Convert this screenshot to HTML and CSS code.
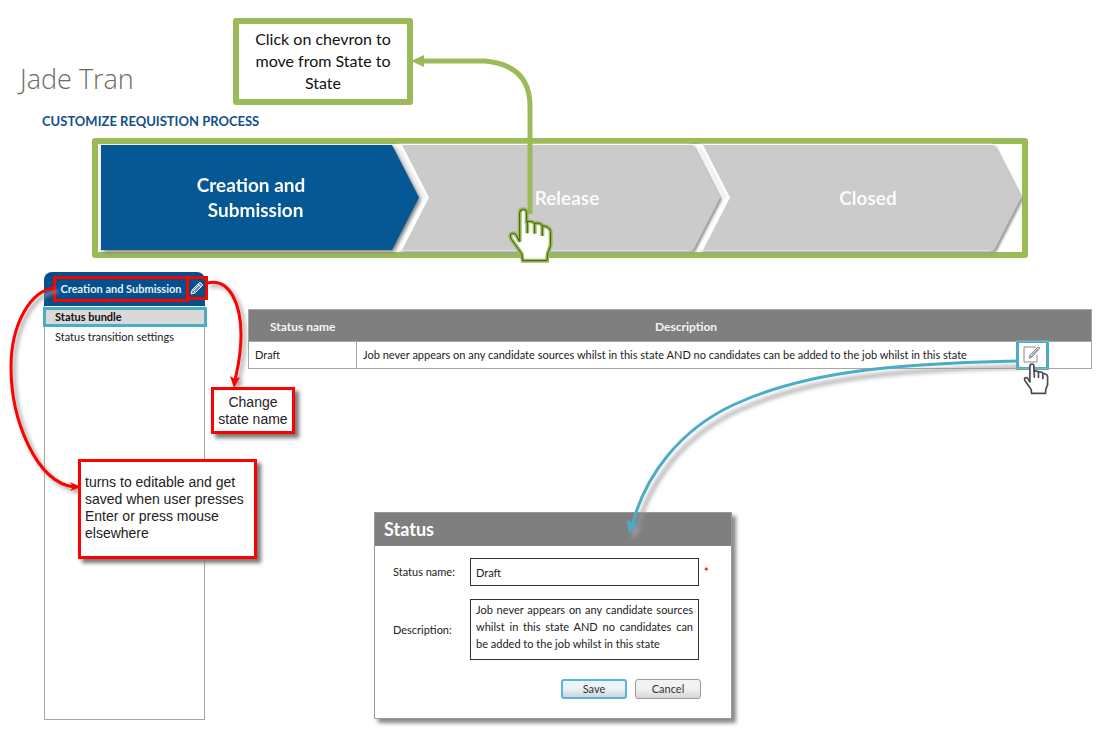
FILE: index.html
```html
<!DOCTYPE html>
<html lang="en">
<head>
<meta charset="utf-8">
<title>Customize requisition process</title>
<link rel="stylesheet" href="styles.css">
</head>
<body>
<div class="page">
  <header class="page-header">
    <h1 class="user-name">Jade Tran</h1>
    <h2 class="page-title">CUSTOMIZE REQUISTION PROCESS</h2>
  </header>

  <nav class="process" aria-label="Process states">
    <div class="step step-active"><button class="chevron" type="button">Creation and<br>&nbsp; Submission</button></div>
    <div class="step"><button class="chevron" type="button">Release</button></div>
    <div class="step"><button class="chevron" type="button">Closed</button></div>
  </nav>

  <div class="content">
    <aside class="sidebar">
      <div class="sidebar-head">
        <button class="state-name" type="button">Creation and Submission</button>
        <button class="state-edit" type="button" aria-label="Edit state name">
          <svg viewBox="0 0 14 14" width="14" height="14"><path d="M1 13l1-4 7-7q1-1 2 0l1 1q1 1 0 2l-7 7zM8 3l3 3M3 9l2 2M4 9l5-5" fill="#6d8fb5" stroke="#e8eef5"/></svg>
        </button>
      </div>
      <ul class="menu">
        <li><a class="menu-item menu-current" href="#bundle">Status bundle</a></li>
        <li><a class="menu-item" href="#transitions">Status transition settings</a></li>
      </ul>
    </aside>

    <main class="main">
      <table class="status-table">
        <thead><tr><th class="col-name">Status name</th><th>Description</th><th class="col-action"></th></tr></thead>
        <tbody><tr>
          <td>Draft</td>
          <td>Job never appears on any candidate sources whilst in this state AND no candidates can be added to the job whilst in this state</td>
          <td class="cell-action"><button class="edit-button" type="button" aria-label="Edit status">
            <svg viewBox="0 0 18 18" width="18" height="18" fill="none" stroke="#8a8a8a"><path d="M13 1H1v15h13V9"/><path d="M6 12l1-3 8-8 2 1-8 9zM7 9l2 2M9 9l6-6" fill="#ddd"/></svg>
          </button></td>
        </tr></tbody>
      </table>

      <form class="dialog">
        <h3 class="dialog-title">Status</h3>
        <div class="dialog-body">
          <label for="status-name">Status name:</label>
          <input class="field" id="status-name" type="text" value="Draft">
          <span class="required">*</span>
          <label for="description">Description:</label>
          <textarea class="field field-area" id="description">Job never appears on any candidate sources whilst in this state AND no candidates can be added to the job whilst in this state</textarea>
        </div>
        <div class="actions">
          <button class="button button-primary" type="button">Save</button>
          <button class="button" type="button">Cancel</button>
        </div>
      </form>
    </main>
  </div>

  <svg class="connectors" viewBox="0 0 1112 730" width="1112" height="730" aria-hidden="true">
    <defs>
      <g id="hand">
        <path d="M89 155V68q0-10 11-10t10 10v27q18-3 23 5 20-3 24 7 22 2 25 17v42l-9 25-2 21H98l-3-21-30-42q-10-17 3-19 8-1 12 8z"/>
        <path d="M112 93v37M134 98v33M157 106v32" fill="none"/>
      </g>
    </defs>
    <g fill="none" stroke="#9bbb59" stroke-width="5">
      <path d="M420 61H485Q530 65 530 106V214"/>
      <path d="M411 61l13-6v12z" fill="#9bbb59" stroke="none"/>
    </g>
    <g transform="translate(490 190) scale(.3333)">
      <use href="#hand" fill="#fff" stroke="#9bbb59" stroke-width="12"/>
      <use href="#hand" fill="none" stroke="#3f5723" stroke-width="3"/>
    </g>
    <g class="cast" fill="none" stroke="#f00" stroke-width="3">
      <path d="M55 288C30 290 11 325 11 367C11 420 36 482 74 487"/>
      <path d="M81 487l-11-5 3 5-3 4z" fill="#f00" stroke="none"/>
      <path d="M207 283C230 277 241 305 241 335C241 356 238 366 235 380"/>
      <path d="M234 388l-4-12 5 3 5-2z" fill="#f00" stroke="none"/>
    </g>
    <g class="cast cast-far" fill="none" stroke="#4bacc6" stroke-width="3">
      <path d="M1016 361C880 364 800 374 733 405C680 430 645 475 632 526"/>
      <path d="M629 534l-2-14 5 3 6-1z" fill="#4bacc6" stroke="none"/>
    </g>
    <g transform="translate(1013 353) scale(.19)">
      <use href="#hand" fill="#fff" stroke="#4d4d58" stroke-width="9"/>
    </g>
  </svg>

  <p class="note note-green">Click on chevron to move from State to State</p>
  <p class="note note-red note-rename">Change<br>state name</p>
  <p class="note note-red note-editable">turns to editable and get saved when user presses Enter or press mouse elsewhere</p>
</div>
</body>
</html>
```
FILE: styles.css
```css
* { box-sizing: border-box; }

body {
  margin: 0;
  background: #fff;
  color: #222;
  font: 11px/16px Lato, "Open Sans", sans-serif;
}

button, input, textarea { font: inherit; color: inherit; margin: 0; }
h1, h2, h3, p, ul { margin: 0; padding: 0; }

.page { position: relative; min-height: 730px; padding: 61px 20px 0; }

.user-name { color: #6c6c64; font: 300 27px/36px "Open Sans", sans-serif; }
.page-title { margin: 14px 0 0 22px; color: #12508c; font-size: 13px; line-height: 20px; }

/* Process chevrons */
.process {
  display: flex;
  margin: 7px 64px 0 72px;
  padding: 1px 1px 2px 3px;
  border: 6px solid #9bbb59;
  border-radius: 3px;
}
.step { flex: 1; filter: drop-shadow(2px 2px 2px #777); }
.step + .step { margin-left: -17px; filter: drop-shadow(-3px 0 1px #fff) drop-shadow(-1px 0 1px #fff) drop-shadow(2px 2px 1px #999); }
.chevron {
  display: block;
  width: 100%;
  height: 105px;
  padding: 0 0 0 12px;
  border: 0;
  background: #cbcbcb;
  color: #fafafa;
  font-size: 19px;
  font-weight: bold;
  line-height: 25px;
  clip-path: polygon(0 0, calc(100% - 27px) 0, 100% 50%, calc(100% - 27px) 100%, 0 100%, 27px 50%);
}
.step-active .chevron {
  padding: 0 18px 2px 0;
  background: #065895;
  clip-path: polygon(0 0, calc(100% - 27px) 0, 100% 50%, calc(100% - 27px) 100%, 0 100%);
}

/* Sidebar and main columns */
.content { display: flex; align-items: flex-start; margin-top: 14px; padding-left: 24px; }
.sidebar { flex: 0 0 161px; min-width: 0; width: 161px; min-height: 448px; display: flex; flex-direction: column; }
.sidebar-head {
  display: flex;
  height: 34px;
  padding: 4px 0 0 9px;
  border-radius: 8px 8px 0 0;
  background: #04508c;
}
.state-name, .state-edit { flex: none; height: 26px; padding: 0; border: 3px solid #f00; background: none; color: #e8eef5; }
.state-name { width: 136px; font-weight: bold; }
.state-edit { width: 22px; height: 24px; margin-left: -3px; display: grid; place-items: center; }
.menu { flex: 1; list-style: none; border: 1px solid #a6a6a6; border-top: 0; }
.menu-item { display: block; padding: 2px 0 0 10px; color: #222; text-decoration: none; }
.menu-current {
  margin: 1px -3px 0 -2px;
  padding: 0 0 0 9px;
  border: 3px solid #4bacc6;
  background: #d9d9d9;
  color: #111;
  font-weight: bold;
  line-height: 14px;
}

.main { flex: 1; min-width: 0; margin: 37px 0 0 43px; }
.status-table { width: 100%; border-collapse: collapse; border: 1px solid #a6a6a6; }
.status-table th { height: 32px; padding: 3px 0 0; background: #7f7f7f; color: #f5f5f5; font-size: 12px; }
.status-table td { height: 27px; padding: 0 6px; border-top: 1px solid #a6a6a6; }
.status-table td + td { border-left: 1px solid #a6a6a6; }
.status-table .cell-action { padding: 0; border-left: 0; }
.col-name { width: 108px; }
.col-action { width: 76px; }
.edit-button {
  display: grid;
  place-items: center;
  width: 33px;
  height: 30px;
  margin: -2px 0;
  padding: 0;
  border: 3px solid #4bacc6;
  background: #fff;
}

/* Status dialog */
.dialog {
  width: 358px;
  margin: 143px 0 0 126px;
  border: 1px solid #999;
  background: #fff;
  box-shadow: 4px 4px 4px #888;
}
.dialog-title { padding: 0 9px; background: #7f7f7f; color: #fff; font-size: 18px; line-height: 33px; }
.dialog-body {
  display: grid;
  grid-template-columns: 77px 1fr 22px;
  row-gap: 13px;
  align-items: center;
  padding: 12px 10px 0 18px;
}
.field { width: 100%; height: 28px; padding: 0 5px; border: 1px solid #333; border-radius: 0; background: #fff; }
.field-area { display: block; height: 61px; padding: 1px 5px; line-height: 17px; text-align: justify; resize: none; overflow: hidden; }
.required { padding-left: 5px; color: #f00; font-weight: bold; }
.actions { display: flex; justify-content: flex-end; gap: 8px; padding: 19px 30px 19px 0; }
.button {
  width: 66px;
  height: 20px;
  padding: 0;
  border: 1px solid #999;
  border-radius: 3px;
  background: linear-gradient(#f2f2f2 45%, #d6d6d6);
  color: #333;
  line-height: 16px;
}
.button-primary { border: 2px solid #5bb5d8; background: linear-gradient(#eef3f7 45%, #cbd6df); }

/* Annotations laid over the screen */
.connectors { position: absolute; top: 0; left: 0; pointer-events: none; }
.cast { filter: drop-shadow(3px 3px 2px #999); }
.cast-far { filter: drop-shadow(4px 6px 2px #999); }
.note { position: absolute; background: #fff; }
.note-green {
  top: 18px;
  left: 233px;
  width: 180px;
  padding: 4px 8px 5px;
  border: 6px solid #9bbb59;
  border-radius: 3px;
  color: #111;
  font-size: 16px;
  line-height: 22px;
  text-align: center;
}
.note-red {
  border: 3px solid #f00;
  box-shadow: 4px 4px 4px #777;
  font: 14px/17px "Liberation Sans", Arial, sans-serif;
}
.note-rename { top: 387px; left: 211px; width: 84px; padding: 4px 0 3px; text-align: center; }
.note-editable { top: 459px; left: 78px; width: 179px; padding: 12px 0 14px 4px; }
```
